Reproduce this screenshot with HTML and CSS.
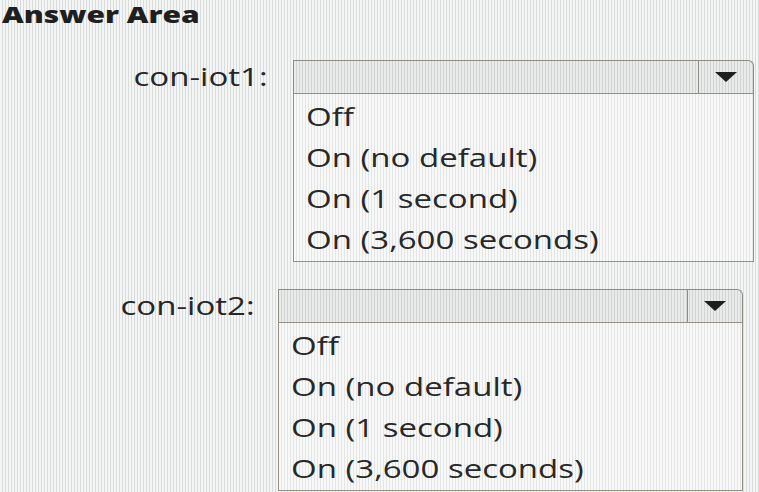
FILE: index.html
```html
<!DOCTYPE html>
<html lang="en">
<head>
<meta charset="utf-8">
<title>Answer Area</title>
<link rel="stylesheet" href="styles.css">
</head>
<body>
<main class="answer-area">
  <h1 class="title"><span class="wide">Answer Area</span></h1>

  <div class="question q1">
    <label class="q-label"><span class="wide-r">con-iot1:</span></label>
    <div class="dropdown">
      <div class="dd-header">
        <div class="dd-value"></div>
        <div class="dd-btn">
          <svg width="22" height="10" viewBox="0 0 22 10"><polygon points="0,0 22,0 11,10" fill="#1e1e1e"/></svg>
        </div>
      </div>
      <ul class="dd-list">
        <li><span class="wide">Off</span></li>
        <li><span class="wide">On (no default)</span></li>
        <li><span class="wide">On (1 second)</span></li>
        <li><span class="wide">On (3,600 seconds)</span></li>
      </ul>
    </div>
  </div>

  <div class="question q2">
    <label class="q-label"><span class="wide-r">con-iot2:</span></label>
    <div class="dropdown">
      <div class="dd-header">
        <div class="dd-value"></div>
        <div class="dd-btn">
          <svg width="22" height="10" viewBox="0 0 22 10"><polygon points="0,0 22,0 11,10" fill="#1e1e1e"/></svg>
        </div>
      </div>
      <ul class="dd-list">
        <li><span class="wide">Off</span></li>
        <li><span class="wide">On (no default)</span></li>
        <li><span class="wide">On (1 second)</span></li>
        <li><span class="wide">On (3,600 seconds)</span></li>
      </ul>
    </div>
  </div>
</main>
</body>
</html>
```

FILE: styles.css
```css
html, body {
  margin: 0;
  padding: 0;
}

body {
  width: 759px;
  height: 492px;
  overflow: hidden;
  font-family: "Open Sans", "Noto Sans", sans-serif;
  color: #2a2a2a;
  background-color: #ececec;
  background-image: repeating-linear-gradient(90deg, #f4f5f5 0 2px, #dadcdc 2px 3px);
}

.answer-area {
  display: flex;
  flex-direction: column;
}

.wide {
  display: inline-block;
  transform: scaleX(1.27);
  transform-origin: left center;
  white-space: nowrap;
}

.wide-r {
  display: inline-block;
  transform: scaleX(1.27);
  transform-origin: right center;
  white-space: nowrap;
}

.title {
  margin: 0;
  padding-left: 2px;
  font-size: 22px;
  font-weight: 800;
  line-height: 28px;
  height: 26px;
  color: #1f1f1f;
}

.title .wide {
  transform: scaleX(1.36);
}

.question {
  display: flex;
  align-items: flex-start;
}

.q1 {
  margin-top: 34px;
}

.q2 {
  margin-top: 27px;
}

.q-label {
  flex: none;
  text-align: right;
  font-size: 26px;
  line-height: 33px;
  height: 33px;
  color: #262626;
}

.q1 .q-label {
  width: 268px;
  margin-right: 25px;
}

.q1 .dropdown {
  width: 461px;
}

.q2 .q-label {
  width: 255px;
  margin-right: 23px;
}

.q2 .dropdown {
  width: 465px;
}

.dropdown {
  flex: none;
  display: flex;
  flex-direction: column;
}

.dd-header {
  display: flex;
  height: 33px;
  box-sizing: border-box;
  border: 1px solid #8f8c86;
  border-bottom: none;
  border-top-right-radius: 6px;
  background-color: #e0e1e0;
  background-image: repeating-linear-gradient(90deg, #e9eaea 0 2px, #d2d4d4 2px 3px);
}

.dd-value {
  flex: 1;
}

.dd-btn {
  width: 54px;
  flex: none;
  display: flex;
  align-items: center;
  justify-content: center;
  border-left: 1px solid #8f8c86;
}

.dd-list {
  margin: 0;
  padding: 2px 0 1px 12px;
  list-style: none;
  border: 1px solid #958f84;
  background-color: #f1f1f1;
  background-image: repeating-linear-gradient(90deg, #f8f8f8 0 2px, #e4e5e5 2px 3px);
}

.dd-list li {
  font-size: 26px;
  line-height: 41px;
  height: 41px;
  color: #282828;
}
```
